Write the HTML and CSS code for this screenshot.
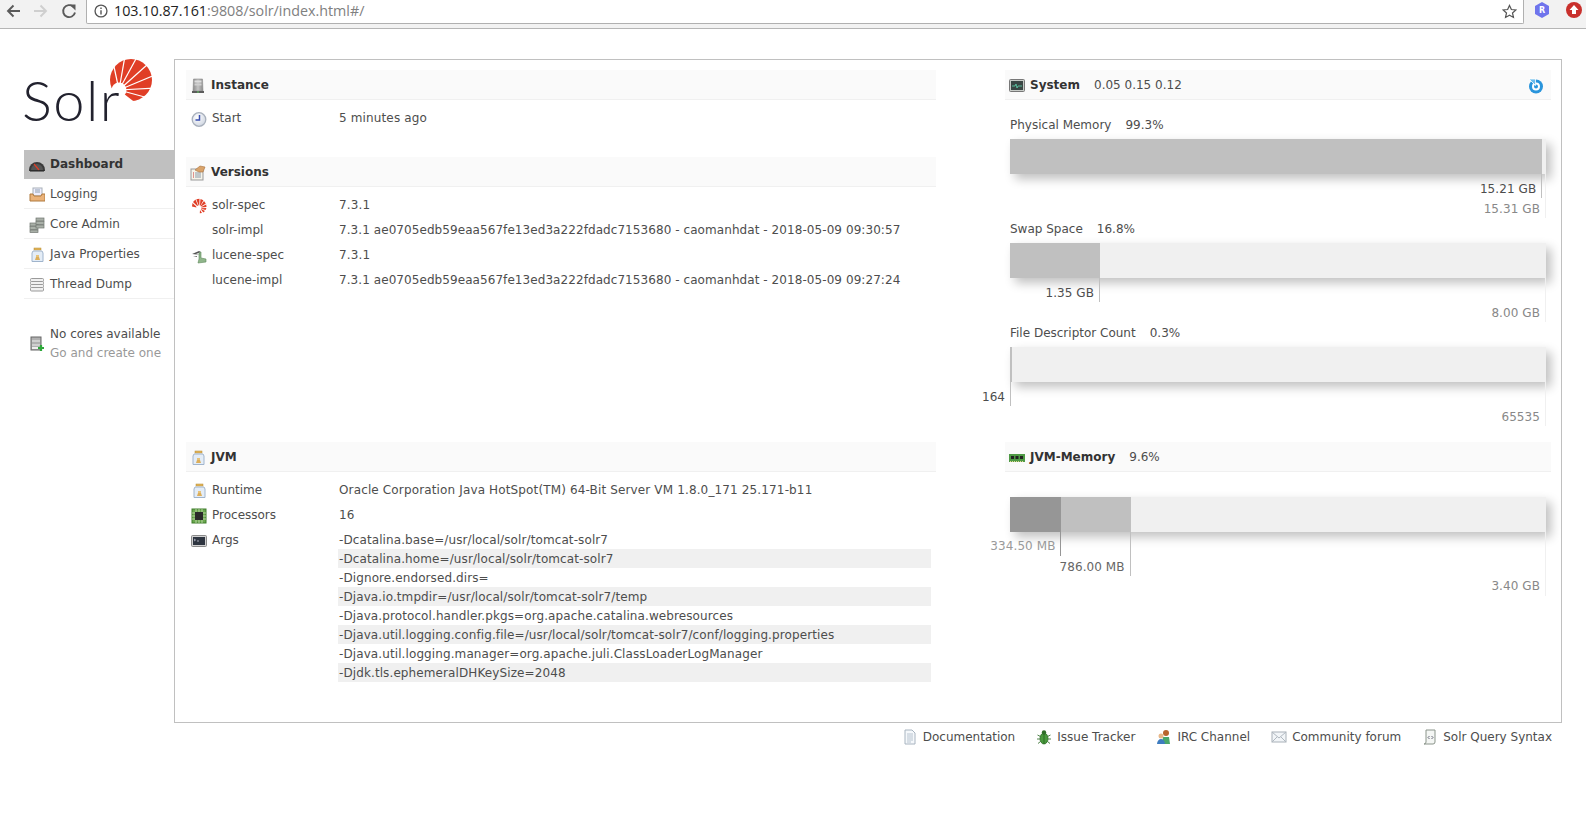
FILE: index.html
```html
<!DOCTYPE html>
<html lang="en">
<head>
<meta charset="utf-8">
<title>Solr Admin</title>
<link rel="stylesheet" href="styles.css">
</head>
<body>
<svg class="defs" aria-hidden="true">
  <defs>
    <linearGradient id="g-silver" x1="0" y1="0" x2="1" y2="0"><stop offset="0" stop-color="#8a8a8a"/><stop offset=".5" stop-color="#c4c4c4"/><stop offset="1" stop-color="#8a8a8a"/></linearGradient>
    <radialGradient id="g-clock" cx=".4" cy=".35" r=".8"><stop offset="0" stop-color="#fff"/><stop offset="1" stop-color="#c6cedc"/></radialGradient>
  </defs>
  <symbol id="i-server" viewBox="0 0 16 16"><path d="M3.500 1h9l.5 12H3z" fill="url(#g-silver)" stroke="#8f8f8f" stroke-width=".6"/><rect x="4.500" y="2.500" width="7" height="2" fill="#dedede"/><rect x="4.500" y="5.500" width="7" height="2" fill="#d0d0d0"/><path d="M2 13h12v2H2z" fill="#5c5c5c"/><rect x="7" y="13.500" width="2" height="1" fill="#5ec85e"/></symbol>
  <symbol id="i-clock" viewBox="0 0 16 16"><circle cx="8" cy="8.500" r="6.800" fill="url(#g-clock)" stroke="#a8b0bc" stroke-width="1.300"/><path d="M8.500 4v5H4.500" fill="none" stroke="#3a4fb0" stroke-width="1.500"/></symbol>
  <symbol id="i-notes" viewBox="0 0 16 16"><rect x="1" y="4" width="12" height="11" fill="#f6f4ea" stroke="#999"/><path d="M3 8h1M3 10h1M3 12h1" stroke="#c33"/><path d="M5 8h6M5 10h6M5 12h6" stroke="#8a9aa8"/><path d="M5 5l5-4 5 1-2 5-4 0z" fill="#d9a36a" stroke="#a8713c" stroke-width=".6"/></symbol>
  <symbol id="i-sun" viewBox="0 0 16 16"><g fill="#e03e26"><path d="M1 8.500L1.500 5 5 8.200 5.500 9.500z"/><path d="M2 4L4.500 1.600 7 7.500 6.200 8z"/><path d="M5.300 1.200L8.500.8 8.300 7.300 7.600 7.500z"/><path d="M9.500.9L12.400 2.300 9.400 7.800 8.900 7.500z"/><path d="M13 3L14.800 5.500 10 8.600 9.600 8z"/><path d="M15.200 6.500L15.500 9 10.400 9.600 10.200 9z"/><path d="M15.400 10L14.600 12 10.200 10.700 10.300 10.200z"/><path d="M14 13L12.300 14.500 9.800 11.300 10 11z"/><path d="M11 15L8.800 15.300 9 12z"/></g></symbol>
  <symbol id="i-lucene" viewBox="0 0 16 16"><path d="M1 6l7-3 2 1-5 2 5 1z" fill="#555"/><path d="M8 5l2-1 0 6 5 1 0 3-8 1 1-4z" fill="#8fb58a" stroke="#5f8a5c" stroke-width=".6"/><path d="M2 9l4-1 0 1z" fill="#666"/></symbol>
  <symbol id="i-jar" viewBox="0 0 16 16"><rect x="5" y="1" width="7" height="2" fill="#e3b65c" stroke="#b58a32" stroke-width=".5"/><path d="M4 4h9l1 2v8.500H3V6z" fill="#e4edf7" stroke="#a0b4cc"/><path d="M6 13l1-3h3l1 3z" fill="#dcae5a"/><rect x="7" y="8" width="3" height="2" fill="#e6c27a"/></symbol>
  <symbol id="i-chip" viewBox="0 0 16 16"><rect x="1" y="1" width="14" height="14" fill="#6aa84f" stroke="#3e7d2a"/><rect x="4" y="4" width="8" height="8" fill="#2a2a2a"/><path d="M1 5h3M1 8h3M1 11h3M12 5h3M12 8h3M12 11h3M5 1v3M8 1v3M11 1v3M5 12v3M8 12v3M11 12v3" stroke="#dce8c8" stroke-width=".7"/></symbol>
  <symbol id="i-term" viewBox="0 0 16 16"><rect x=".5" y="2.500" width="15" height="11" rx="1" fill="#d0d0d0" stroke="#8a8a8a"/><rect x="2" y="4" width="12" height="8" fill="#2e3540"/><path d="M3 6l1.500 1L3 8M6 8h2" stroke="#dde" stroke-width=".7" fill="none"/></symbol>
  <symbol id="i-gauge" viewBox="0 0 16 16"><path d="M0 13a8 8 0 0 1 16 0v1H0z" fill="#3a3a3a"/><path d="M2 13a6 6 0 0 1 12 0z" fill="#555"/><path d="M5 7l5 6" stroke="#e03e26" stroke-width="1.200"/><path d="M1 14h14" stroke="#222"/></symbol>
  <symbol id="i-inbox" viewBox="0 0 16 16"><rect x="4" y="1" width="9" height="8" fill="#eef" stroke="#a8b0b8"/><path d="M6 3h5M6 5h5" stroke="#8fa0b0"/><path d="M1 7h3l1 2h7l1-2h3v7H1z" fill="#eab27a" stroke="#b07a3f"/></symbol>
  <symbol id="i-cores" viewBox="0 0 16 16"><g fill="#a9b0a8" stroke="#6f766f" stroke-width=".7"><rect x="1" y="6" width="8" height="3"/><rect x="1" y="9.500" width="8" height="3"/><rect x="1" y="13" width="8" height="2.500"/><rect x="7" y="1" width="8" height="3"/><rect x="7" y="4.500" width="8" height="3"/><rect x="7" y="8" width="8" height="3"/></g></symbol>
  <symbol id="i-stack" viewBox="0 0 16 16"><g fill="#f0f0f0" stroke="#9a9a9a"><rect x="1.500" y="1.500" width="13" height="3" rx="1"/><rect x="1.500" y="4.500" width="13" height="3" rx="1"/><rect x="1.500" y="7.500" width="13" height="3" rx="1"/><rect x="1.500" y="10.500" width="13" height="3.500" rx="1"/></g></symbol>
  <symbol id="i-dbadd" viewBox="0 0 16 16"><rect x="2" y="1" width="10" height="13" fill="#b0b0b0" stroke="#666"/><path d="M3 5h8M3 9h8" stroke="#eee"/><rect x="3" y="11" width="8" height="2" fill="#eee"/><path d="M12 9v6M9 12h6" stroke="#2ea83a" stroke-width="2.200"/></symbol>
  <symbol id="i-monitor" viewBox="0 0 16 16"><rect x=".5" y="1.500" width="15" height="12" rx="1" fill="#c8ccc8" stroke="#777"/><rect x="2" y="3" width="12" height="9" fill="#3a4644"/><path d="M3 8h3l1-2 1 4 1-2h4" stroke="#5fd8b0" fill="none" stroke-width=".8"/></symbol>
  <symbol id="i-refresh" viewBox="0 0 16 16"><circle cx="8" cy="8.500" r="7" fill="#2a95dc"/><circle cx="8" cy="8.500" r="3" fill="none" stroke="#fff" stroke-width="2"/><path d="M1 1h6.500v6.500z" fill="#6cbcec" stroke="#fff" stroke-width=".8"/></symbol>
  <symbol id="i-ram" viewBox="0 0 16 16"><rect x="0" y="4" width="16" height="8" fill="#4f9a45"/><rect x="2" y="6" width="3" height="3" fill="#222"/><rect x="6.500" y="6" width="3" height="3" fill="#222"/><rect x="11" y="6" width="3" height="3" fill="#222"/><path d="M1 11.500h14" stroke="#e0d890" stroke-dasharray="1 1"/></symbol>
  <symbol id="i-doc" viewBox="0 0 16 16"><path d="M3 1h7l3 3v11H3z" fill="#f5f8fb" stroke="#a8b4c0"/><path d="M5 5h6M5 7h6M5 9h6M5 11h6M5 13h4" stroke="#b8c4d0"/></symbol>
  <symbol id="i-bug" viewBox="0 0 16 16"><ellipse cx="8" cy="9.500" rx="4" ry="5.500" fill="#4a9a3e" stroke="#27641f" stroke-width=".7"/><circle cx="8" cy="3.500" r="2.200" fill="#2f6d28"/><path d="M8 5v10M1.500 6l3 1.500M14.500 6l-3 1.500M1 10h3M15 10h-3M2 14.500L4.500 12.500M14 14.500l-2.500-2" stroke="#27641f" stroke-width=".8"/></symbol>
  <symbol id="i-people" viewBox="0 0 16 16"><circle cx="10" cy="4" r="3" fill="#b8642c"/><path d="M6 15l1-7h6l1 7z" fill="#4aa86a"/><circle cx="5" cy="7" r="2.500" fill="#e8b88a"/><path d="M1 15c0-3 2-5 4-5s4 2 4 5z" fill="#3e7cc0"/></symbol>
  <symbol id="i-mail" viewBox="0 0 16 16"><rect x="1" y="3" width="14" height="10" fill="#f2f5f8" stroke="#a8b0b8"/><path d="M1 3l7 6 7-6M1 13l5-5M15 13l-5-5" fill="none" stroke="#b0b8c0"/></symbol>
  <symbol id="i-script" viewBox="0 0 16 16"><path d="M4 1h9v12a2 2 0 0 1-2 2H2a2 2 0 0 0 2-2z" fill="#f4f6f4" stroke="#8a948a"/><path d="M7.500 7L6 8.500 7.500 10M9.500 7L11 8.500 9.500 10" fill="none" stroke="#667"/></symbol>
</svg>

<header class="browser">
  <svg class="nav" viewBox="0 0 16 16" width="16" height="16"><path d="M15 8H3M8.500 2.500L3 8l5.500 5.500" fill="none" stroke="#5a5a5a" stroke-width="1.900"/></svg>
  <svg class="nav" viewBox="0 0 16 16" width="16" height="16"><path d="M1 8h12M7.500 2.500L13 8l-5.500 5.500" fill="none" stroke="#cfcfcf" stroke-width="1.900"/></svg>
  <svg class="nav" viewBox="0 0 16 16" width="16" height="16"><path d="M14 9.500A6 6 0 1 1 12.300 3.800" fill="none" stroke="#5a5a5a" stroke-width="1.900"/><path d="M9 1h6v6z" transform="translate(-.5 .5)" fill="#5a5a5a"/></svg>
  <div class="omnibox">
    <svg viewBox="0 0 16 16" width="14" height="14"><circle cx="8" cy="8" r="6.800" fill="none" stroke="#555" stroke-width="1.500"/><path d="M8 7v5M8 4v1.800" stroke="#555" stroke-width="1.600"/></svg>
    <span class="url"><b>103.10.87.161</b>:9808/solr/index.html#/</span>
    <svg class="star" viewBox="0 0 16 16" width="15" height="15"><path d="M8 1.500l2 4.400 4.800.5-3.600 3.200 1 4.700L8 11.900l-4.200 2.400 1-4.700L1.200 6.400 6 5.900z" fill="none" stroke="#555" stroke-width="1.300"/></svg>
  </div>
  <svg class="ext" viewBox="0 0 16 16" width="16" height="16"><path d="M8 0l7 4v8l-7 4-7-4V4z" fill="#6f74ec"/><text x="8" y="11" text-anchor="middle" class="ext-r">R</text></svg>
  <svg class="ext" viewBox="0 0 16 16" width="16" height="16"><circle cx="8" cy="8" r="8" fill="#c9302c"/><path d="M8 3l4.500 5H10v4H6V8H3.500z" fill="#fff"/></svg>
</header>

<div class="page">
  <aside class="sidebar">
    <a class="logo">
      <svg class="logo-sun" viewBox="108 58 46 46" width="46" height="46">
        <circle cx="131" cy="80" r="21" fill="#e03e26"/>
        <path d="M119 90L100 86V112H145L137 104z" fill="#fff"/>
        <circle cx="119" cy="90" r="7.500" fill="#fff"/>
        <g stroke="#fff" stroke-width="1.200">
          <path d="M119 90L113 62"/>
          <path d="M119 90L125 56"/>
          <path d="M119 90L137 57"/>
          <path d="M119 90L148 64"/>
          <path d="M119 90L155 75"/>
          <path d="M119 90L157 88"/>
          <path d="M119 90L152 99"/>
        </g>
      </svg>
      <span class="logo-text">Solr</span>
    </a>
    <nav class="menu">
      <a class="item active"><svg class="ico"><use href="#i-gauge"/></svg>Dashboard</a>
      <a class="item"><svg class="ico"><use href="#i-inbox"/></svg>Logging</a>
      <a class="item"><svg class="ico"><use href="#i-cores"/></svg>Core Admin</a>
      <a class="item"><svg class="ico"><use href="#i-jar"/></svg>Java Properties</a>
      <a class="item"><svg class="ico"><use href="#i-stack"/></svg>Thread Dump</a>
    </nav>
    <div class="nocores">
      <svg class="ico"><use href="#i-dbadd"/></svg>
      <div><div>No cores available</div><div class="muted">Go and create one</div></div>
    </div>
  </aside>

  <main class="content">
    <div class="col">
      <section class="sec sec-instance">
        <h2 class="head"><svg class="ico"><use href="#i-server"/></svg>Instance</h2>
        <div class="row"><div class="key"><svg class="ico"><use href="#i-clock"/></svg>Start</div><div class="val">5 minutes ago</div></div>
      </section>
      <section class="sec">
        <h2 class="head"><svg class="ico"><use href="#i-notes"/></svg>Versions</h2>
        <div class="row"><div class="key"><svg class="ico"><use href="#i-sun"/></svg>solr-spec</div><div class="val">7.3.1</div></div>
        <div class="row"><div class="key"><span class="ico"></span>solr-impl</div><div class="val val-build">7.3.1 ae0705edb59eaa567fe13ed3a222fdadc7153680 - caomanhdat - 2018-05-09 09:30:57</div></div>
        <div class="row"><div class="key"><svg class="ico"><use href="#i-lucene"/></svg>lucene-spec</div><div class="val">7.3.1</div></div>
        <div class="row"><div class="key"><span class="ico"></span>lucene-impl</div><div class="val val-build">7.3.1 ae0705edb59eaa567fe13ed3a222fdadc7153680 - caomanhdat - 2018-05-09 09:27:24</div></div>
      </section>
    </div>

    <div class="col">
      <section class="sec">
        <h2 class="head"><svg class="ico"><use href="#i-monitor"/></svg>System<span class="head-note">0.05 0.15 0.12</span><svg class="ico refresh"><use href="#i-refresh"/></svg></h2>
        <div class="metric">
          <div class="metric-label">Physical Memory<span class="pct">99.3%</span></div>
          <div class="holder">
            <div class="bar light" style="width:99.3%"></div>
            <div class="mark short dark" style="right:0.7%">15.21 GB</div>
            <div class="mark max">15.31 GB</div>
          </div>
        </div>
        <div class="metric">
          <div class="metric-label">Swap Space<span class="pct">16.8%</span></div>
          <div class="holder">
            <div class="bar light" style="width:16.8%"></div>
            <div class="mark short dark" style="right:83.2%">1.35 GB</div>
            <div class="mark max">8.00 GB</div>
          </div>
        </div>
        <div class="metric">
          <div class="metric-label">File Descriptor Count<span class="pct">0.3%</span></div>
          <div class="holder">
            <div class="bar light" style="width:0.3%"></div>
            <div class="mark short dark" style="right:99.8%">164</div>
            <div class="mark max">65535</div>
          </div>
        </div>
      </section>
    </div>

    <div class="col">
      <section class="sec">
        <h2 class="head"><svg class="ico"><use href="#i-jar"/></svg>JVM</h2>
        <div class="row"><div class="key"><svg class="ico"><use href="#i-jar"/></svg>Runtime</div><div class="val">Oracle Corporation Java HotSpot(TM) 64-Bit Server VM 1.8.0_171 25.171-b11</div></div>
        <div class="row"><div class="key"><svg class="ico"><use href="#i-chip"/></svg>Processors</div><div class="val">16</div></div>
        <div class="row row-args"><div class="key"><svg class="ico"><use href="#i-term"/></svg>Args</div>
          <div class="args">
            <div class="arg">-Dcatalina.base=/usr/local/solr/tomcat-solr7</div>
            <div class="arg">-Dcatalina.home=/usr/local/solr/tomcat-solr7</div>
            <div class="arg">-Dignore.endorsed.dirs=</div>
            <div class="arg">-Djava.io.tmpdir=/usr/local/solr/tomcat-solr7/temp</div>
            <div class="arg">-Djava.protocol.handler.pkgs=org.apache.catalina.webresources</div>
            <div class="arg">-Djava.util.logging.config.file=/usr/local/solr/tomcat-solr7/conf/logging.properties</div>
            <div class="arg">-Djava.util.logging.manager=org.apache.juli.ClassLoaderLogManager</div>
            <div class="arg">-Djdk.tls.ephemeralDHKeySize=2048</div>
          </div>
        </div>
      </section>
    </div>

    <div class="col">
      <section class="sec">
        <h2 class="head"><svg class="ico"><use href="#i-ram"/></svg>JVM-Memory<span class="head-note">9.6%</span></h2>
        <div class="metric metric-jvm">
          <div class="holder">
            <div class="bar light" style="width:22.5%"></div>
            <div class="bar dim" style="width:9.6%"></div>
            <div class="mark short faint" style="right:90.4%">334.50 MB</div>
            <div class="mark long mid" style="right:77.5%">786.00 MB</div>
            <div class="mark max deep">3.40 GB</div>
          </div>
        </div>
      </section>
    </div>
  </main>
</div>

<footer class="links">
  <a class="link"><svg class="ico"><use href="#i-doc"/></svg>Documentation</a>
  <a class="link"><svg class="ico"><use href="#i-bug"/></svg>Issue Tracker</a>
  <a class="link"><svg class="ico"><use href="#i-people"/></svg>IRC Channel</a>
  <a class="link"><svg class="ico"><use href="#i-mail"/></svg>Community forum</a>
  <a class="link"><svg class="ico"><use href="#i-script"/></svg>Solr Query Syntax</a>
</footer>
</body>
</html>
```
FILE: styles.css
```css
* { box-sizing: border-box; }
html, body { margin: 0; padding: 0; background: #fff; }
body { font: 12px/15px "DejaVu Sans", Verdana, sans-serif; color: #4d4d4d; height: 814px; overflow: hidden; }
.defs { position: absolute; width: 0; height: 0; }

.browser { height: 29px; background: #f2f2f2; border-bottom: 1px solid #b5b5b5; display: flex; align-items: flex-start; padding: 3px 0 0 5px; }
.nav { margin-right: 12px; flex: none; }
.omnibox { width: 1438px; height: 24px; margin: -3px 0 0 -3px; background: #fff; border: 1px solid #b0b0b0; border-top: 0; border-radius: 0 0 2px 2px; display: flex; align-items: center; padding: 0 5px 1px 7px; gap: 6px; }
.url { font: 14.3px/20px "Open Sans", sans-serif; color: #808080; flex: 1; white-space: nowrap; }
.url b { font-weight: 400; color: #222; }
.star { flex: none; margin-right: 1px; }
.ext { flex: none; margin: -1px 0 0 10px; }
.ext + .ext { margin-left: 16px; }
.ext-r { font: bold 8px "DejaVu Sans", sans-serif; fill: #fff; }

.page { display: flex; padding: 30px 0 0 24px; }
.sidebar { width: 150px; flex: none; }
.logo { display: block; position: relative; height: 91px; }
.logo-text { display: block; position: relative; font: 300 56px/70px "Lato", sans-serif; color: #22222e; padding-top: 6px; margin-left: -2px; letter-spacing: 1.5px; }
.logo-sun { position: absolute; left: 84px; top: -1px; }
.menu { display: block; }
.item { display: flex; align-items: center; height: 30px; padding: 2px 0 0 5px; border-bottom: 1px solid #f0f0f0; }
.item.active { height: 29px; padding-top: 0; background: #c0c0c0; border-bottom: 0; font-weight: bold; color: #333; }
.ico { width: 16px; height: 16px; flex: none; display: block; margin-right: 5px; }
.nocores { display: flex; align-items: center; padding: 26px 0 0 5px; line-height: 19px; }
.muted { color: #999; }

.content { width: 1388px; height: 664px; border: 1px solid #c0c0c0; padding: 10px 10px 0 11px; display: grid; grid-template-columns: 750px 546px; grid-template-rows: 372px auto; column-gap: 69px; align-content: start; }
.head { margin: 0; height: 30px; background: #fafafa; border-bottom: 1px solid #f0f0f0; display: flex; align-items: center; padding: 2px 0 0 4px; font: bold 12px/15px "DejaVu Sans", sans-serif; color: #333; }
.head-note { font-weight: normal; color: #4d4d4d; margin-left: 14px; }
.refresh { margin: 0 7px 0 auto; }
.sec-instance { height: 87px; }
.row { display: flex; align-items: center; height: 25px; padding-top: 2px; }
.sec .head + .row { margin-top: 5px; }
.key { width: 152px; flex: none; display: flex; align-items: center; padding-left: 5px; }
.val { white-space: nowrap; margin-left: 1px; letter-spacing: .14px; }
.val-build { letter-spacing: .07px; }
.row-args { align-items: flex-start; height: auto; padding-top: 0; }
.row-args .key { height: 25px; padding-top: 2px; }
.args { flex: 1; padding: 3px 5px 0 0; }
.arg { height: 19px; line-height: 19px; padding: 1px 0 0 1px; white-space: nowrap; letter-spacing: .1px; }
.arg:nth-child(even) { background: #f0f0f0; }

.metric { padding: 0 5px; height: 104px; }
.head + .metric { margin-top: 13px; }
.metric-label { height: 26px; padding-top: 5px; white-space: nowrap; }
.pct { margin-left: 14px; }
.holder { position: relative; height: 35px; background: #f0f0f0; box-shadow: 5px 5px 10px #c0c0c0; }
.bar { position: absolute; left: 0; top: 0; height: 35px; }
.bar.light { background: #c0c0c0; }
.bar.dim { background: #969696; }
.mark { position: absolute; top: 0; white-space: nowrap; display: flex; align-items: flex-end; padding: 0 5px 1px 0; border-right: 1px solid #c0c0c0; height: 59px; letter-spacing: .08px; }
.mark.short { height: 59px; }
.mark.long { height: 79px; }
.mark.dark { color: #4d4d4d; }
.mark.mid { color: #666; }
.mark.faint { color: #999; border-right-color: #969696; padding-bottom: 2px; }
.mark.max { right: 0; height: 79px; color: #888; border-right-color: #f0f0f0; }
.mark.max.deep { height: 99px; padding-bottom: 2px; }
.head + .metric-jvm { margin-top: 25px; }

.links { display: flex; justify-content: flex-end; padding: 6px 34px 0 0; gap: 21px; }
.link { display: flex; align-items: center; white-space: nowrap; }
```
